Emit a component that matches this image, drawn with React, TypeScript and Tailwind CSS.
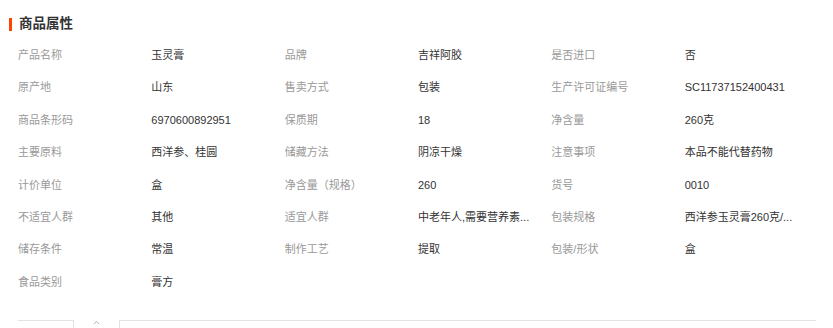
import { ChevronUp } from 'lucide-react';

const attrs: [string, string][] = [
  ['产品名称', '玉灵膏'],
  ['品牌', '吉祥阿胶'],
  ['是否进口', '否'],
  ['原产地', '山东'],
  ['售卖方式', '包装'],
  ['生产许可证编号', 'SC11737152400431'],
  ['商品条形码', '6970600892951'],
  ['保质期', '18'],
  ['净含量', '260克'],
  ['主要原料', '西洋参、桂圆'],
  ['储藏方法', '阴凉干燥'],
  ['注意事项', '本品不能代替药物'],
  ['计价单位', '盒'],
  ['净含量（规格）', '260'],
  ['货号', '0010'],
  ['不适宜人群', '其他'],
  ['适宜人群', '中老年人,需要营养素...'],
  ['包装规格', '西洋参玉灵膏260克/...'],
  ['储存条件', '常温'],
  ['制作工艺', '提取'],
  ['包装/形状', '盒'],
  ['食品类别', '膏方'],
];

export default function App() {
  return (
    <div
      className="w-[833px] h-[328px] overflow-hidden bg-white text-[#333]"
      style={{ fontFamily: '"Liberation Sans", "Noto Sans CJK SC", sans-serif' }}
    >
      <div className="flex items-center h-[16px] mt-[16px] ml-[9px]">
        <span className="w-[3px] h-[13px] bg-[#ff4400]" />
        <h2 className="ml-[7px] text-[13.5px] font-bold leading-none text-[#333]">商品属性</h2>
      </div>

      <div className="ml-[18px] mt-[7px] w-[800px] grid grid-cols-6 auto-rows-[32.4px] text-[11px]">
        {attrs.map(([label, value]) => (
          <div key={label} className="contents">
            <div className="flex items-center text-[#999] whitespace-nowrap">{label}</div>
            <div className="flex items-center whitespace-nowrap">{value}</div>
          </div>
        ))}
      </div>

      <div className="flex items-start mt-[22px]">
        <div className="ml-[18px] w-[56px] h-[10px] border-t border-r border-[#e3e3e3]" />
        <div className="w-[45px] flex justify-center">
          <ChevronUp className="size-[9px] text-[#8a9bb5] -mt-[2px]" strokeWidth={2} />
        </div>
        <div className="w-[697px] h-[10px] border-t border-l border-[#e3e3e3]" />
      </div>
    </div>
  );
}
